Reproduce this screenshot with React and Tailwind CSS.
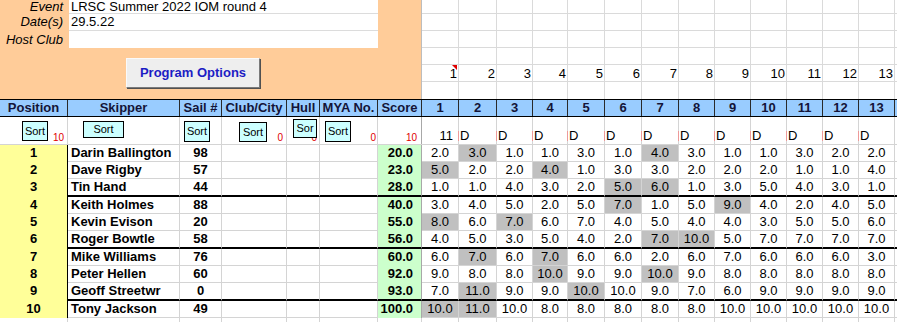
const RACE_W = ["w-[37px]", "w-[38px]", "w-[36px]", "w-[35px]", "w-[37px]", "w-[37px]", "w-[37px]", "w-[36px]", "w-[36px]", "w-[36px]", "w-[36px]", "w-[36px]", "w-[36px]"];

const COLS = [
  { label: "Position", w: "w-[68px]" },
  { label: "Skipper", w: "w-[112px]" },
  { label: "Sail #", w: "w-[42px]" },
  { label: "Club/City", w: "w-[65px]" },
  { label: "Hull", w: "w-[33px]" },
  { label: "MYA No.", w: "w-[58px]" },
  { label: "Score", w: "w-[44px]" },
];

const ROWS = [
  { pos: 1, name: "Darin Ballington", sail: "98", score: "20.0", r: "2 3 1 1 3 1 4 3 1 1 3 2 2", d: [1, 6] },
  { pos: 2, name: "Dave Rigby", sail: "57", score: "23.0", r: "5 2 2 4 1 3 3 2 2 2 1 1 4", d: [0, 3] },
  { pos: 3, name: "Tin Hand", sail: "44", score: "28.0", r: "1 1 4 3 2 5 6 1 3 5 4 3 1", d: [5, 6], thick: true },
  { pos: 4, name: "Keith Holmes", sail: "88", score: "40.0", r: "3 4 5 2 5 7 1 5 9 4 2 4 5", d: [5, 8] },
  { pos: 5, name: "Kevin Evison", sail: "20", score: "55.0", r: "8 6 7 6 7 4 5 4 4 3 5 5 6", d: [0, 2] },
  { pos: 6, name: "Roger Bowtle", sail: "58", score: "56.0", r: "4 5 3 5 4 2 7 10 5 7 7 7 7", d: [6, 7], thick: true },
  { pos: 7, name: "Mike Williams", sail: "76", score: "60.0", r: "6 7 6 7 6 6 2 6 7 6 6 6 3", d: [1, 3] },
  { pos: 8, name: "Peter Hellen", sail: "60", score: "92.0", r: "9 8 8 10 9 9 10 9 8 8 8 8 8", d: [3, 6] },
  { pos: 9, name: "Geoff Streetwr", sail: "0", score: "93.0", r: "7 11 9 9 10 10 9 7 6 9 9 9 9", d: [1, 4], thick: true },
  { pos: 10, name: "Tony Jackson", sail: "49", score: "100.0", r: "10 11 10 8 8 8 8 8 10 10 10 10 10", d: [0, 1] },
];

const GRID_ROWS = ["h-[14px]", "h-[17px]", "h-[17px]", "h-[17px]", "h-[17px]", "h-[17px]"];

function SortBtn({ className, text = "Sort" }) {
  return (
    <div className={`absolute flex items-center justify-center overflow-hidden bg-[#CCFFFF] border border-black text-[11px] leading-none text-black ${className}`}>
      {text}
    </div>
  );
}

function RedNum({ children, className = "pr-[3px]" }) {
  return (
    <div className={`absolute right-0 bottom-[1px] text-[10px] leading-none text-[#E00000] ${className}`}>{children}</div>
  );
}

export default function App() {
  return (
    <div className="w-[897px] h-[322px] overflow-hidden bg-white text-black text-[13px] font-['Liberation_Sans',Arial,sans-serif]">
      {/* top block */}
      <div className="flex h-[99px]">
        <div className="w-[422px] shrink-0 bg-[#FFCC99] border-r border-[#bdbdbd] flex flex-col">
          <div className="flex h-[14px] leading-[14px]">
            <div className="w-[69px] text-right pr-[6px] italic">Event</div>
            <div className="w-[309px] bg-white border-b border-[#dcdcdc] pl-[2px]">LRSC Summer 2022 IOM round 4</div>
          </div>
          <div className="flex h-[17px] leading-[16px]">
            <div className="w-[69px] text-right pr-[6px] italic">Date(s)</div>
            <div className="w-[309px] bg-white border-b border-[#dcdcdc] pl-[2px]">29.5.22</div>
          </div>
          <div className="flex h-[17px] leading-[17px]">
            <div className="w-[69px] text-right pr-[6px] italic whitespace-nowrap">Host Club</div>
            <div className="w-[309px] bg-white"></div>
          </div>
          <div className="mt-[10px] ml-[126px] w-[134px] h-[30px] flex items-center justify-center bg-[#EEEEEE] border border-t-[#fafafa] border-l-[#fafafa] border-b-[#7a7a7a] border-r-[#7a7a7a] shadow-[1px_1px_0_#505050] font-bold text-[#1c1cc4]">
            Program Options
          </div>
        </div>
        <div className="flex-1 flex flex-col">
          {GRID_ROWS.map((h, ri) => (
            <div key={ri} className={`flex ${h} ${ri < 5 ? "border-b border-[#dadada]" : ""}`}>
              {RACE_W.map((w, ci) => (
                <div key={ci} className={`${w} shrink-0 border-r border-[#dadada] relative text-right pr-[1px] leading-[16px] pt-[1px]`}>
                  {ri === 4 ? ci + 1 : ""}
                  {ri === 4 && ci === 0 && (
                    <div className="absolute right-[1px] top-0 w-0 h-0 border-l-[5px] border-l-transparent border-t-[5px] border-t-[#e00000]" />
                  )}
                </div>
              ))}
              <div className="flex-1" />
            </div>
          ))}
        </div>
      </div>

      {/* header row */}
      <div className="flex h-[18px] border-y border-black bg-[#99CCFF] font-bold text-[#141438] leading-[16px]">
        {COLS.map((c) => (
          <div key={c.label} className={`${c.w} shrink-0 border-r border-[#2a2a2a] text-center whitespace-nowrap`}>{c.label}</div>
        ))}
        {RACE_W.map((w, i) => (
          <div key={i} className={`${w} shrink-0 border-r border-[#2a2a2a] text-center`}>{i + 1}</div>
        ))}
        <div className="flex-1" />
      </div>

      {/* sort row */}
      <div className="flex h-[28px] border-b border-[#d4d4d4]">
        <div className="w-[68px] shrink-0 border-r border-[#d4d4d4] relative">
          <SortBtn className="left-[22px] top-[4px] w-[26px] h-[20px]" />
          <RedNum>10</RedNum>
        </div>
        <div className="w-[112px] shrink-0 border-r border-[#d4d4d4] relative">
          <SortBtn className="left-[15px] top-[4px] w-[41px] h-[17px]" />
        </div>
        <div className="w-[42px] shrink-0 border-r border-[#d4d4d4] relative">
          <SortBtn className="left-[4px] top-[4px] w-[26px] h-[21px]" />
        </div>
        <div className="w-[65px] shrink-0 border-r border-[#d4d4d4] relative">
          <SortBtn className="left-[17px] top-[5px] w-[28px] h-[20px]" />
          <RedNum>0</RedNum>
        </div>
        <div className="w-[33px] shrink-0 border-r border-[#d4d4d4] relative">
          <RedNum className="pr-[2px]">0</RedNum>
          <SortBtn className="left-[6px] top-[2px] w-[24px] h-[19px]" text="Sor" />
        </div>
        <div className="w-[58px] shrink-0 border-r border-[#d4d4d4] relative">
          <SortBtn className="left-[5px] top-[4px] w-[26px] h-[21px]" />
          <RedNum className="pr-[1px]">0</RedNum>
        </div>
        <div className="w-[44px] shrink-0 border-r border-[#a8a8a8] relative">
          <RedNum className="pr-[4px]">10</RedNum>
        </div>
        {RACE_W.map((w, i) => (
          <div key={i} className={`${w} shrink-0 border-r border-[#d4d4d4] flex items-end pb-[1px] leading-[15px]`}>
            {i === 0 ? (
              <div className="w-full text-right pr-[5px]">11</div>
            ) : (
              <div className="flex items-end pl-[1px]">
                <span className="w-px h-[10px] bg-[#ee9a9a] mb-[2px] -ml-[2px] mr-[1px]" />
                D
              </div>
            )}
          </div>
        ))}
        <div className="flex-1" />
      </div>

      {/* data rows */}
      {ROWS.map((row) => {
        const line = row.thick ? "h-[18px] border-b-2 border-black" : "h-[17px] border-b border-[#d4d4d4]";
        const results = row.r.split(" ");
        return (
          <div key={row.pos} className={`flex ${row.thick ? "h-[18px]" : "h-[17px]"} leading-[16px]`}>
            <div className="w-[68px] shrink-0 bg-[#FFFF99] border-r border-black font-bold text-center">{row.pos}</div>
            <div className={`w-[112px] shrink-0 ${line} border-r border-r-[#d4d4d4] font-bold pl-[3px] whitespace-nowrap`}>{row.name}</div>
            <div className={`w-[42px] shrink-0 ${line} border-r border-r-[#d4d4d4] font-bold text-center`}>{row.sail}</div>
            <div className={`w-[65px] shrink-0 ${line} border-r border-r-[#d4d4d4]`} />
            <div className={`w-[33px] shrink-0 ${line} border-r border-r-[#d4d4d4]`} />
            <div className={`w-[58px] shrink-0 ${line} border-r border-r-[#d4d4d4]`} />
            <div className={`w-[44px] shrink-0 ${row.thick ? "h-[18px] border-b-2 border-black" : "h-[17px]"} border-r border-r-[#a8a8a8] bg-[#CCFFCC] font-bold text-right pr-[8px]`}>{row.score}</div>
            {results.map((v, i) => (
              <div
                key={i}
                className={`${RACE_W[i]} shrink-0 ${line} border-r border-r-[#d4d4d4] text-center ${row.d.includes(i) ? "bg-[#C0C0C0]" : ""}`}
              >
                {v}.0
              </div>
            ))}
            <div className={`flex-1 ${line}`} />
          </div>
        );
      })}
      <div className="flex h-[17px]">
        <div className="w-[68px] shrink-0 border-r border-[#d4d4d4]" />
        <div className="w-[112px] shrink-0 border-r border-[#d4d4d4]" />
        <div className="w-[42px] shrink-0 border-r border-[#d4d4d4]" />
        <div className="w-[65px] shrink-0 border-r border-[#d4d4d4]" />
        <div className="w-[33px] shrink-0 border-r border-[#d4d4d4]" />
        <div className="w-[58px] shrink-0 border-r border-[#d4d4d4]" />
        <div className="w-[44px] shrink-0 border-r border-[#d4d4d4]" />
        {RACE_W.map((w, i) => (
          <div key={i} className={`${w} shrink-0 border-r border-[#d4d4d4]`} />
        ))}
      </div>
    </div>
  );
}
